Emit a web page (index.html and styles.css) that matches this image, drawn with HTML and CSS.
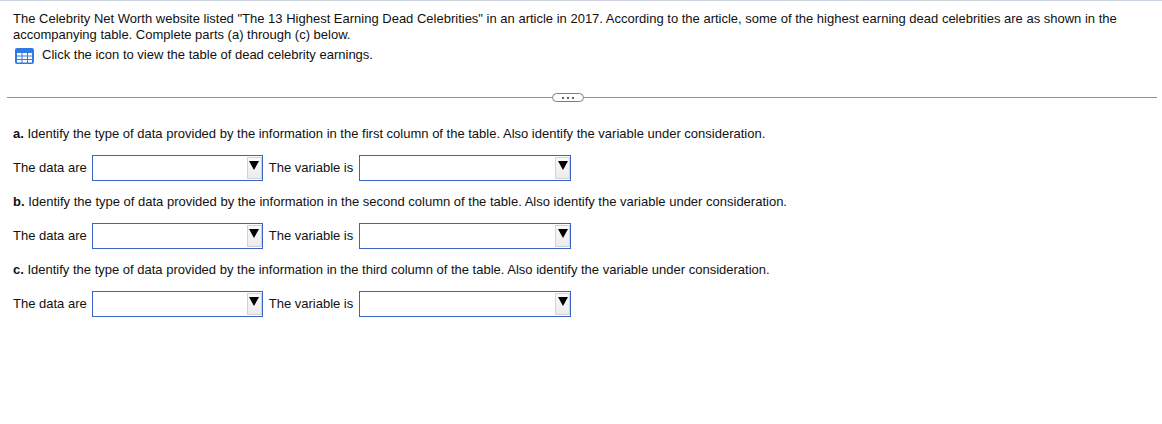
FILE: index.html
```html
<!DOCTYPE html>
<html lang="en">

<head>
  <title>Dead celebrity earnings</title>
  <meta charset="UTF-8">
  <link rel="stylesheet" href="styles.css">
</head>

<body>
  <div id="question_intro">
    <p>The Celebrity Net Worth website listed "The 13 Highest Earning Dead Celebrities" in an article in 2017. According to the article, some of the highest earning dead celebrities are as shown in the accompanying table. Complete parts (a) through (c) below.</p>
    <div class="table-link">
      <svg class="table-icon" width="19" height="16" viewBox="0 0 19 16" aria-hidden="true">
        <rect x="0" y="0" width="19" height="16" rx="2" fill="#2f7ae6"></rect>
        <g fill="#ffffff">
          <rect x="2" y="5" width="4.5" height="2.5"></rect>
          <rect x="7.5" y="5" width="4.5" height="2.5"></rect>
          <rect x="13" y="5" width="4" height="2.5"></rect>
          <rect x="2" y="8.5" width="4.5" height="2.5"></rect>
          <rect x="7.5" y="8.5" width="4.5" height="2.5"></rect>
          <rect x="13" y="8.5" width="4" height="2.5"></rect>
          <rect x="2" y="12" width="4.5" height="2.5"></rect>
          <rect x="7.5" y="12" width="4.5" height="2.5"></rect>
          <rect x="13" y="12" width="4" height="2.5"></rect>
        </g>
      </svg>
      <span class="table-link-text">Click the icon to view the table of dead celebrity earnings.</span>
    </div>
  </div>

  <div class="divider">
    <div class="more-pill"><span></span><span></span><span></span></div>
  </div>

  <div id="question_parts">
    <p class="part-title"><b>a.</b> Identify the type of data provided by the information in the first column of the table. Also identify the variable under consideration.</p>
    <div class="answer-row">
      <span>The data are</span>
      <div class="dropdown dropdown-data"><div class="arrow-btn"><i></i></div></div>
      <span>The variable is</span>
      <div class="dropdown dropdown-variable"><div class="arrow-btn"><i></i></div></div>
    </div>

    <p class="part-title"><b>b.</b> Identify the type of data provided by the information in the second column of the table. Also identify the variable under consideration.</p>
    <div class="answer-row">
      <span>The data are</span>
      <div class="dropdown dropdown-data"><div class="arrow-btn"><i></i></div></div>
      <span>The variable is</span>
      <div class="dropdown dropdown-variable"><div class="arrow-btn"><i></i></div></div>
    </div>

    <p class="part-title"><b>c.</b> Identify the type of data provided by the information in the third column of the table. Also identify the variable under consideration.</p>
    <div class="answer-row">
      <span>The data are</span>
      <div class="dropdown dropdown-data"><div class="arrow-btn"><i></i></div></div>
      <span>The variable is</span>
      <div class="dropdown dropdown-variable"><div class="arrow-btn"><i></i></div></div>
    </div>
  </div>
</body>

</html>
```

FILE: styles.css
```css
html,
body {
  height: 100%;
}

body {
  margin: 0;
  border-top: 1px solid #ccd3e0;
  box-sizing: border-box;
  background-color: white;
  color: #111;
  font-family: "Liberation Sans", Arial, sans-serif;
  font-size: 13px;
  line-height: 16px;
  overflow: hidden;
}

p {
  margin: 0;
}

#question_intro {
  padding: 10px 13px 0 13px;
}

.table-link {
  display: flex;
  align-items: flex-start;
  gap: 8px;
  margin-top: 3px;
  height: 18px;
}

.table-icon {
  flex-shrink: 0;
  margin: 2px 0 0 2px;
}

.table-link-text {
  margin-top: 1px;
}

/* rule with the pill in the middle */
.divider {
  display: flex;
  justify-content: center;
  align-items: center;
  height: 13px;
  margin: 27px 5px 0 7px;
  background: linear-gradient(#8a93a0, #8a93a0) center / 100% 1px no-repeat;
}

.more-pill {
  display: flex;
  justify-content: center;
  align-items: center;
  gap: 3px;
  box-sizing: border-box;
  width: 32px;
  height: 9px;
  margin-right: 28px;
  background-color: white;
  border: 1px solid #76808e;
  border-radius: 5px;
}

.more-pill span {
  width: 2px;
  height: 2px;
  background-color: #5a6472;
}

#question_parts {
  padding: 22px 13px 0 13px;
}

.part-title {
  height: 16px;
}

.answer-row {
  display: flex;
  align-items: center;
  height: 26px;
  margin: 13px 0;
}

.dropdown {
  display: flex;
  justify-content: flex-end;
  align-items: center;
  box-sizing: border-box;
  height: 26px;
  background-color: white;
  border: 1px solid #3a62c8;
}

.dropdown-data {
  width: 171px;
  margin: 0 6px 0 5px;
}

.dropdown-variable {
  width: 212px;
  margin-left: 6px;
}

.arrow-btn {
  display: flex;
  justify-content: center;
  box-sizing: border-box;
  width: 15px;
  height: 22px;
  padding-top: 3px;
  background: linear-gradient(#fafafa, #ececec);
  border: 1px solid #d2d2d2;
}

.arrow-btn i {
  width: 0;
  height: 0;
  border-left: 5px solid transparent;
  border-right: 5px solid transparent;
  border-top: 9px solid black;
}
```
